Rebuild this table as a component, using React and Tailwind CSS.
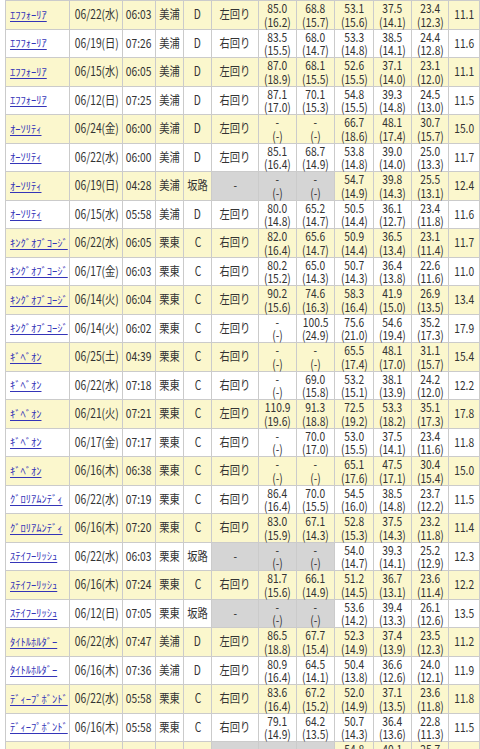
import React from "react";

// laps: "time/split" or "-" ; slope rows (坂路) get grey dir + first two laps
const data = [
  ["ｴﾌﾌｫｰﾘｱ", "06/22(水)", "06:03", "美浦", "D", "左回り", ["85.0/16.2", "68.8/15.7", "53.1/15.6", "37.5/14.1", "23.4/12.3"], "11.1"],
  ["ｴﾌﾌｫｰﾘｱ", "06/19(日)", "07:26", "美浦", "D", "右回り", ["83.5/15.5", "68.0/14.7", "53.3/14.8", "38.5/14.1", "24.4/12.8"], "11.6"],
  ["ｴﾌﾌｫｰﾘｱ", "06/15(水)", "06:05", "美浦", "D", "左回り", ["87.0/18.9", "68.1/15.5", "52.6/15.5", "37.1/14.0", "23.1/12.0"], "11.1"],
  ["ｴﾌﾌｫｰﾘｱ", "06/12(日)", "07:25", "美浦", "D", "右回り", ["87.1/17.0", "70.1/15.3", "54.8/15.5", "39.3/14.8", "24.5/13.0"], "11.5"],
  ["ｵｰｿﾘﾃｨ", "06/24(金)", "06:00", "美浦", "D", "左回り", ["-", "-", "66.7/18.6", "48.1/17.4", "30.7/15.7"], "15.0"],
  ["ｵｰｿﾘﾃｨ", "06/22(水)", "06:00", "美浦", "D", "左回り", ["85.1/16.4", "68.7/14.9", "53.8/14.8", "39.0/14.0", "25.0/13.3"], "11.7"],
  ["ｵｰｿﾘﾃｨ", "06/19(日)", "04:28", "美浦", "坂路", null, ["-", "-", "54.7/14.9", "39.8/14.3", "25.5/13.1"], "12.4"],
  ["ｵｰｿﾘﾃｨ", "06/15(水)", "05:58", "美浦", "D", "左回り", ["80.0/14.8", "65.2/14.7", "50.5/14.4", "36.1/12.7", "23.4/11.8"], "11.6"],
  ["ｷﾝｸﾞｵﾌﾞｺｰｼﾞ", "06/22(水)", "06:05", "栗東", "C", "右回り", ["82.0/16.4", "65.6/14.7", "50.9/14.4", "36.5/13.4", "23.1/11.4"], "11.7"],
  ["ｷﾝｸﾞｵﾌﾞｺｰｼﾞ", "06/17(金)", "06:03", "栗東", "C", "右回り", ["80.2/15.2", "65.0/14.3", "50.7/14.3", "36.4/13.8", "22.6/11.6"], "11.0"],
  ["ｷﾝｸﾞｵﾌﾞｺｰｼﾞ", "06/14(火)", "06:04", "栗東", "C", "左回り", ["90.2/15.6", "74.6/16.3", "58.3/16.4", "41.9/15.0", "26.9/13.5"], "13.4"],
  ["ｷﾝｸﾞｵﾌﾞｺｰｼﾞ", "06/14(火)", "06:02", "栗東", "C", "左回り", ["-", "100.5/24.9", "75.6/21.0", "54.6/19.4", "35.2/17.3"], "17.9"],
  ["ｷﾞﾍﾞｵﾝ", "06/25(土)", "04:39", "栗東", "C", "右回り", ["-", "-", "65.5/17.4", "48.1/17.0", "31.1/15.7"], "15.4"],
  ["ｷﾞﾍﾞｵﾝ", "06/22(水)", "07:18", "栗東", "C", "右回り", ["-", "69.0/15.8", "53.2/15.1", "38.1/13.9", "24.2/12.0"], "12.2"],
  ["ｷﾞﾍﾞｵﾝ", "06/21(火)", "07:21", "栗東", "C", "左回り", ["110.9/19.6", "91.3/18.8", "72.5/19.2", "53.3/18.2", "35.1/17.3"], "17.8"],
  ["ｷﾞﾍﾞｵﾝ", "06/17(金)", "07:17", "栗東", "C", "右回り", ["-", "70.0/17.0", "53.0/15.5", "37.5/14.1", "23.4/11.6"], "11.8"],
  ["ｷﾞﾍﾞｵﾝ", "06/16(木)", "06:38", "栗東", "C", "右回り", ["-", "-", "65.1/17.6", "47.5/17.1", "30.4/15.4"], "15.0"],
  ["ｸﾞﾛﾘｱﾑﾝﾃﾞｨ", "06/22(水)", "07:19", "栗東", "C", "右回り", ["86.4/16.4", "70.0/15.5", "54.5/16.0", "38.5/14.8", "23.7/12.2"], "11.5"],
  ["ｸﾞﾛﾘｱﾑﾝﾃﾞｨ", "06/16(木)", "07:20", "栗東", "C", "右回り", ["83.0/15.9", "67.1/14.3", "52.8/15.3", "37.5/14.3", "23.2/11.8"], "11.4"],
  ["ｽﾃｲﾌｰﾘｯｼｭ", "06/22(水)", "06:03", "栗東", "坂路", null, ["-", "-", "54.0/14.7", "39.3/14.1", "25.2/12.9"], "12.3"],
  ["ｽﾃｲﾌｰﾘｯｼｭ", "06/16(木)", "07:24", "栗東", "C", "右回り", ["81.7/15.6", "66.1/14.9", "51.2/14.5", "36.7/13.1", "23.6/11.4"], "12.2"],
  ["ｽﾃｲﾌｰﾘｯｼｭ", "06/12(日)", "07:05", "栗東", "坂路", null, ["-", "-", "53.6/14.2", "39.4/13.3", "26.1/12.6"], "13.5"],
  ["ﾀｲﾄﾙﾎﾙﾀﾞｰ", "06/22(水)", "07:47", "美浦", "D", "左回り", ["86.5/18.8", "67.7/15.4", "52.3/14.9", "37.4/13.9", "23.5/12.3"], "11.2"],
  ["ﾀｲﾄﾙﾎﾙﾀﾞｰ", "06/16(木)", "07:36", "美浦", "D", "左回り", ["80.9/16.4", "64.5/14.1", "50.4/13.8", "36.6/12.6", "24.0/12.1"], "11.9"],
  ["ﾃﾞｨｰﾌﾟﾎﾞﾝﾄﾞ", "06/22(水)", "05:58", "栗東", "C", "右回り", ["83.6/16.4", "67.2/15.2", "52.0/14.9", "37.1/13.5", "23.6/11.8"], "11.8"],
  ["ﾃﾞｨｰﾌﾟﾎﾞﾝﾄﾞ", "06/16(木)", "05:58", "栗東", "C", "右回り", ["79.1/14.9", "64.2/13.5", "50.7/14.3", "36.4/13.6", "22.8/11.3"], "11.5"],
  ["ﾃﾞｨｰﾌﾟﾎﾞﾝﾄﾞ", "06/12(日)", "06:11", "栗東", "坂路", null, ["-", "-", "54.8/14.7", "40.1/14.4", "25.7/12.8"], "12.8"],
];

const widths = ["w-[64px]", "w-[53px]", "w-[33px]", "w-[28px]", "w-[28px]", "w-[47px]", "w-[38px]", "w-[38px]", "w-[39px]", "w-[38px]", "w-[37px]", "w-[31px]"];

function Txt({ children }) {
  return <span className="inline-block scale-x-[0.82] whitespace-nowrap">{children}</span>;
}

function Lap({ value, grey }) {
  const [t, s] = value === "-" ? ["-", "-"] : value.split("/");
  return (
    <td className={`border border-[#cbcbcb] p-0 text-center leading-[13.5px] ${grey ? "bg-[#d5d5d5]" : ""}`}>
      <Txt>{t}</Txt>
      <br />
      <Txt>({s})</Txt>
    </td>
  );
}

export default function App() {
  return (
    <div className="bg-white pl-[5px] font-['Noto_Sans_CJK_JP',sans-serif] text-[12.5px] text-[#333]">
      <table className="table-fixed border-collapse w-[474px]">
        <colgroup>
          {widths.map((w, i) => (
            <col key={i} className={w} />
          ))}
        </colgroup>
        <tbody>
          {data.map((r, i) => {
            const slope = r[5] === null;
            return (
              <tr key={i} className={`h-[28.5px] ${i % 2 === 0 ? "bg-[#fbf7cd]" : "bg-white"}`}>
                <td className="border border-[#cbcbcb] p-0 pl-[4px] text-[10.5px] whitespace-nowrap overflow-hidden">
                  <a href="#" className="text-[#3434b8] underline underline-offset-2">
                    {r[0]}
                  </a>
                </td>
                <td className="border border-[#cbcbcb] p-0 text-center"><Txt>{r[1]}</Txt></td>
                <td className="border border-[#cbcbcb] p-0 text-center"><Txt>{r[2]}</Txt></td>
                <td className="border border-[#cbcbcb] p-0 text-center"><Txt>{r[3]}</Txt></td>
                <td className="border border-[#cbcbcb] p-0 text-center"><Txt>{r[4]}</Txt></td>
                <td className={`border border-[#cbcbcb] p-0 text-center ${slope ? "bg-[#d5d5d5]" : ""}`}>
                  <Txt>{slope ? "-" : r[5]}</Txt>
                </td>
                {r[6].map((v, j) => (
                  <Lap key={j} value={v} grey={slope && j < 2} />
                ))}
                <td className="border border-[#cbcbcb] p-0 text-center"><Txt>{r[7]}</Txt></td>
              </tr>
            );
          })}
        </tbody>
      </table>
    </div>
  );
}
